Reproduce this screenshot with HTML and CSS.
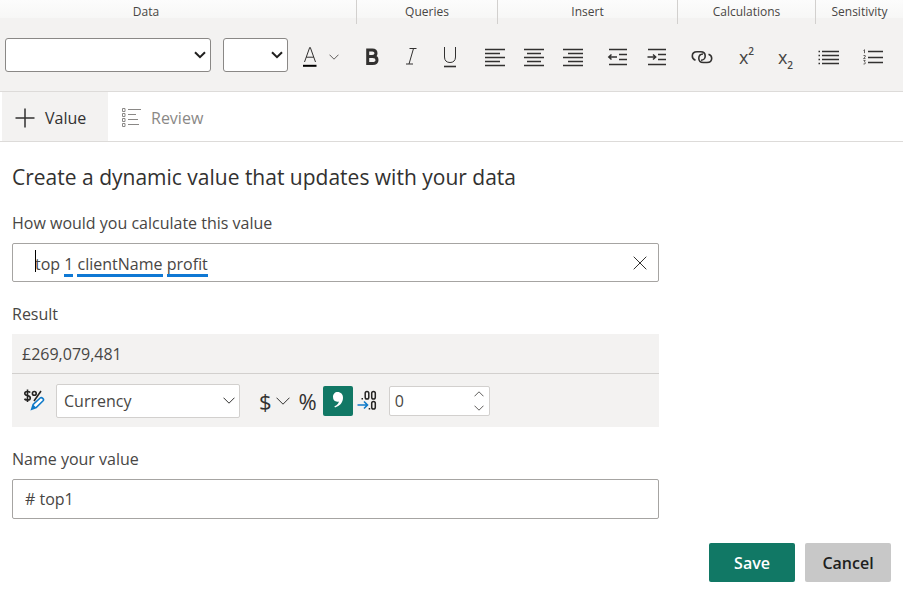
FILE: index.html
```html
<!DOCTYPE html>
<html lang="en">
<head>
<meta charset="utf-8">
<meta name="viewport" content="width=device-width, initial-scale=1">
<title>Smart narrative value</title>
<link rel="stylesheet" href="styles.css">
</head>
<body>
<header class="ribbon">
  <span class="ribbon-group ribbon-data">Data</span>
  <span class="ribbon-group">Queries</span>
  <span class="ribbon-group">Insert</span>
  <span class="ribbon-group">Calculations</span>
  <span class="ribbon-group">Sensitivity</span>
</header>

<div class="toolbar" role="toolbar" aria-label="Text formatting">
  <div class="picker picker-font">
    <select aria-label="Font family"><option></option></select>
    <svg class="picker-arrow" width="12" height="8" viewBox="0 0 12 8"><path d="M1 1.2l5 5 5-5"/></svg>
  </div>
  <div class="picker picker-size">
    <select aria-label="Font size"><option></option></select>
    <svg class="picker-arrow" width="12" height="8" viewBox="0 0 12 8"><path d="M1 1.2l5 5 5-5"/></svg>
  </div>
  <button class="color-button" aria-label="Font color">
    <svg class="icon" width="16" height="24" viewBox="0 0 16 24"><path d="M2.500 17L7.700 2.500h.6L13.500 17M4.200 12.200h7.600"/><path class="bar" d="M1 20.800h13.500"/></svg>
    <svg class="icon fine" width="10" height="6" viewBox="0 0 10 6"><path d="M.5.700L5 5.200 9.500.700"/></svg>
  </button>
  <div class="tool-group">
    <button class="tool" aria-label="Bold"><svg class="icon" width="24" height="24" viewBox="0 0 24 24"><path class="heavy" d="M7.700 5v13.500h4.800c3 0 4.500-1.300 4.500-3.600 0-2.100-1.500-3.300-4.300-3.400H7.700h4.500c2.500 0 3.800-1.200 3.800-3.200C16 6 14.800 5 12.300 5z"/></svg></button>
    <button class="tool" aria-label="Italic"><svg class="icon" width="24" height="24" viewBox="0 0 24 24"><path d="M10.500 3.500h7M7 19h7M14.500 3.500L10 19"/></svg></button>
    <button class="tool" aria-label="Underline"><svg class="icon" width="24" height="24" viewBox="0 0 24 24"><path d="M6.500 2v10c0 3.700 2.200 5.500 5.500 5.500s5.500-1.800 5.500-5.500V2"/><path d="M6 21.500h12" stroke-width="1.600"/></svg></button>
  </div>
  <div class="tool-group">
    <button class="tool" aria-label="Align left"><svg class="icon" width="24" height="24" viewBox="0 0 24 24"><g stroke-width="1.600"><path d="M2 4.500h20M2 8.500h15M2 12.500h20M2 16.500h15M2 20.500h20"/></g></svg></button>
    <button class="tool" aria-label="Align center"><svg class="icon" width="24" height="24" viewBox="0 0 24 24"><g stroke-width="1.600"><path d="M2 4.500h20M5 8.500h14M2 12.500h20M5 16.500h14M2 20.500h20"/></g></svg></button>
    <button class="tool" aria-label="Align right"><svg class="icon" width="24" height="24" viewBox="0 0 24 24"><g stroke-width="1.600"><path d="M2 4.500h20M7 8.500h15M2 12.500h20M7 16.500h15M2 20.500h20"/></g></svg></button>
  </div>
  <div class="tool-group">
    <button class="tool" aria-label="Decrease indent"><svg class="icon" width="24" height="24" viewBox="0 0 24 24"><g stroke-width="1.500"><path d="M3 4.500h18M13 9.500h8M13 14.500h8M3 19.500h18M2.500 12H11M5.500 9.500L2.800 12l2.700 2.500"/></g></svg></button>
    <button class="tool" aria-label="Increase indent"><svg class="icon" width="24" height="24" viewBox="0 0 24 24"><g stroke-width="1.500"><path d="M3 4.500h18M13 9.500h8M13 14.500h8M3 19.500h18M2.500 12H11M8 9.500l2.700 2.500L8 14.500"/></g></svg></button>
  </div>
  <div class="tool-group">
    <button class="tool" aria-label="Link"><svg class="icon" width="24" height="24" viewBox="0 0 24 24"><g stroke-width="1.600"><path d="M5.500 15.200C3.300 14.400 2.300 12.700 2.300 11 2.300 8.500 4.200 6.700 7 6.700h3.700c2.800 0 4.500 1.900 4.500 4.300s-1.800 4.300-4.200 4.300"/><path d="M18.500 9.200c2.200.8 3.200 2.300 3.200 4 0 2.500-1.900 4.300-4.700 4.300h-3.700c-2.800 0-4.500-1.900-4.500-4.300s1.800-4.100 4.200-4.200"/></g></svg></button>
  </div>
  <div class="tool-group">
    <button class="tool script" aria-label="Superscript">x<sup>2</sup></button>
    <button class="tool script" aria-label="Subscript">x<sub>2</sub></button>
  </div>
  <div class="tool-group tool-lists">
    <button class="tool" aria-label="Bulleted list"><svg class="icon" width="24" height="24" viewBox="0 0 24 24"><g stroke-width="1.500"><path d="M5 6.500h17M5 10.500h17M5 14.500h17M5 18.500h17"/><path d="M1.500 6.500H3M1.500 10.500H3M1.500 14.500H3M1.500 18.500H3"/></g></svg></button>
    <button class="tool" aria-label="Numbered list"><svg class="icon" width="24" height="24" viewBox="0 0 24 24"><path d="M7 6.500h15M7 12.500h15M7 17.500h15" stroke-width="1.500"/><path class="fine" d="M2.500 5.500l1-.8v3.500M2.500 10.500h1.700V12l-1.700 1.600h2M2.500 15.500h1.700l-.8 1.400 1 .8-.6 1.300H2.500"/></svg></button>
  </div>
</div>

<nav class="tabs">
  <button class="tab tab-active"><svg class="icon" width="20" height="20" viewBox="0 0 20 20"><path d="M10 .5v19M.5 10h19" stroke-width="1.500"/></svg>Value</button>
  <button class="tab tab-review"><svg class="icon" width="20" height="20" viewBox="0 0 20 20"><path d="M7 1.500h13M7 6.500h8M7 11.500h10M7 16.500h11"/><path d="M1.500.5h2.500v3H1.500zM1.500 5.500h2.500v3H1.500zM1.500 10.500h2.500v3H1.500zM1.500 15.500h2.500v3H1.500z"/></svg>Review</button>
</nav>

<main class="panel">
  <h1>Create a dynamic value that updates with your data</h1>
  <form class="form">
    <label for="query">How would you calculate this value</label>
    <div class="query">
      <input id="query" type="text" value="top 1 clientName profit" spellcheck="false">
      <div class="query-marks" aria-hidden="true">
        <span class="caret"></span><span class="mark mark-number"></span><span class="mark mark-field"></span><span class="mark mark-measure"></span>
      </div>
      <button class="clear" type="button" aria-label="Clear"><svg class="icon" width="14" height="14" viewBox="0 0 14 14"><path d="M.700.700l12.600 12.600M13.300.700L.700 13.300"/></svg></button>
    </div>

    <span class="caption">Result</span>
    <section class="result" aria-label="Result">
      <output class="result-value">£269,079,481</output>
      <div class="format">
        <svg class="format-icon" width="22" height="24" viewBox="0 0 22 24" aria-hidden="true">
          <g fill="none" stroke="#252423" stroke-width="1.600"><path d="M7.300 3.500C6.500 2.700 5.500 2.500 4.300 2.500c-1.500 0-2.500.8-2.500 1.900 0 2.900 5.500 1.400 5.500 4.500 0 1.300-1.200 2.100-2.700 2.100-1.300 0-2.300-.3-3.200-1M4.500.5v12.500"/><circle cx="11.300" cy="4.400" r="1.900"/><path d="M18 2l-7 10"/></g>
          <path d="M8.700 20.200l1.500-4.700 7-6.500c1.500-1.400 4.300 1.300 2.900 2.800l-6.900 6.800z" fill="#fff" stroke="#0f7ac9" stroke-width="1.600"/><path d="M10.200 15.700l3 2.900-4.500 1.600z" fill="#0f7ac9"/>
        </svg>
        <div class="format-type">
          <select aria-label="Format"><option>Currency</option></select>
          <svg class="icon" width="12" height="7" viewBox="0 0 12 7"><path d="M.5.700L6 6.200 11.500.700"/></svg>
        </div>
        <div class="format-buttons">
          <button class="currency" type="button" aria-label="Currency symbol">$<svg class="icon" width="14" height="8" viewBox="0 0 14 8"><path d="M.5.700L7 7.200 13.500.700"/></svg></button>
          <button class="percent" type="button" aria-label="Percent">%</button>
          <button class="thousands" type="button" aria-label="Thousands separator" aria-pressed="true"><svg width="12" height="18" viewBox="0 0 12 18"><path d="M5.500 0C8.800 0 11 2.200 11 5.800c0 4.800-3.200 8.400-8 9.700l-.6-1.200c2.600-1.100 4.200-2.700 4.500-4.800-.5.200-1 .3-1.600.3C2.700 9.800 1 7.900 1 5.100 1 2.100 2.900 0 5.500 0z" fill="#fff"/></svg></button>
          <label class="decimals-icon" for="decimals" title="Decimal places"><svg width="20" height="22" viewBox="0 0 20 22"><g fill="none" stroke="#252423" stroke-width="1.500"><rect x="8.200" y="1.500" width="3.600" height="7.500" rx="1.800"/><rect x="14.700" y="1.500" width="3.600" height="7.500" rx="1.800"/><rect x="14.700" y="11.500" width="3.600" height="7.500" rx="1.800"/><path d="M4.500 8.800H6M11.700 18.800h1.500"/></g><path d="M.5 15h10M7 11.500l3.500 3.500L7 18.500" fill="none" stroke="#0f7ac9" stroke-width="1.600"/></svg></label>
        </div>
        <div class="decimals">
          <input id="decimals" type="text" inputmode="numeric" value="0">
          <div class="spin">
            <button type="button" aria-label="Increase"><svg class="icon fine" width="10" height="6" viewBox="0 0 10 6"><path d="M.5 5.300L5 .800l4.500 4.500"/></svg></button>
            <button type="button" aria-label="Decrease"><svg class="icon fine" width="10" height="6" viewBox="0 0 10 6"><path d="M.5.700L5 5.200 9.500.700"/></svg></button>
          </div>
        </div>
      </div>
    </section>

    <label for="name">Name your value</label>
    <input class="name" id="name" type="text" value="# top1" spellcheck="false">
  </form>
</main>

<footer class="actions">
  <button class="action save">Save</button>
  <button class="action cancel">Cancel</button>
</footer>
</body>
</html>
```
FILE: styles.css
```css
* { box-sizing: border-box; }

body {
  margin: 0;
  background: #fff;
  color: #484644;
  font: 16px/24px "Segoe UI", "Open Sans", "Noto Sans", sans-serif;
}

button, input, select {
  margin: 0;
  padding: 0;
  border: 0;
  background: none;
  color: inherit;
  font: inherit;
}

select { appearance: none; }

svg { display: block; flex: none; }

.icon {
  fill: none;
  stroke: #323130;
}

/* Ribbon group captions */
.ribbon {
  display: grid;
  grid-template-columns: 357fr 141fr 180fr 138fr 87fr;
  height: 18px;
  background: linear-gradient(#fcfcfc, #f7f7f6);
  font-size: 12px;
  line-height: 24px;
}

.ribbon-group {
  border-right: 1px solid #d2d0ce;
  text-align: center;
}

.ribbon-data { padding-right: 64px; }
.ribbon-group:last-child { border-right: 0; }

/* Formatting toolbar */
.toolbar {
  display: flex;
  align-items: center;
  gap: 6px;
  height: 74px;
  padding: 0 5px;
  border-bottom: 1px solid #dddbd9;
  background: #f3f2f1;
}

.picker {
  display: grid;
  align-items: center;
  height: 34px;
  margin-right: 6px;
  border: 1px solid #8a8886;
  border-radius: 3px;
  background: #fff;
}

.picker-font { width: 206px; }
.picker-size { width: 65px; }

.picker select, .picker-arrow { grid-area: 1 / 1; }
.picker select { width: 100%; height: 100%; }

.picker-arrow {
  justify-self: end;
  margin-right: 4px;
  fill: none;
  stroke: #201f1e;
  stroke-width: 2px;
  pointer-events: none;
}

.color-button {
  display: flex;
  align-items: center;
  gap: 11px;
  width: 46px;
  padding: 4px 0 0 2px;
}

.color-button .bar { stroke: #000; stroke-width: 2px; }

.tool-group { display: flex; }

.tool {
  display: flex;
  align-items: center;
  justify-content: center;
  width: 39px;
  height: 34px;
  padding-top: 4px;
}

.tool .heavy { stroke-width: 3px; }
.fine { stroke: #605e5c; }

.script { font-size: 18px; }

.script sup, .script sub {
  font-size: 10px;
  font-weight: 600;
  line-height: 12px;
}

.script sup { margin-bottom: 12px; }
.script sub { margin-top: 16px; }

.tool-lists { gap: 8px; }
.tool-lists .tool { width: 36px; }

/* Tabs */
.tabs {
  display: flex;
  height: 50px;
  padding-left: 2px;
  border-bottom: 1px solid #dddbd9;
}

.tab {
  display: flex;
  align-items: center;
  gap: 10px;
  padding: 2px 13px 0;
}

.tab-active {
  width: 106px;
  background: #f3f2f1;
  color: #323130;
}

.tab-review { color: #8a8886; }
.tab-review .icon { stroke: #8a8886; }

/* Value editor */
.panel { padding: 21px 12px 0; }

h1 {
  margin: 0;
  color: #323130;
  font-size: 21px;
  font-weight: 400;
  line-height: 28px;
}

.form {
  display: flex;
  flex-direction: column;
  max-width: 647px;
}

label, .caption { line-height: 24px; }
.form > label, .caption { margin-top: 20px; }

.query {
  display: grid;
  grid-template-columns: 1fr 37px;
  position: relative;
  height: 39px;
  margin-top: 8px;
  border: 1px solid #a6a4a2;
  border-radius: 2px;
}

.query input { padding: 2px 0 0 22px; }

.query-marks {
  display: flex;
  align-items: flex-end;
  position: absolute;
  inset: 0 auto 4px 22px;
  pointer-events: none;
}

.caret {
  width: 1px;
  height: 22px;
  margin: 0 28px 5px 0;
  background: #000;
}

.mark { height: 3px; background: #0f78d4; }
.mark-number { width: 9px; margin-right: 4px; }
.mark-field { width: 86px; margin-right: 4px; }
.mark-measure { width: 41px; }

.clear {
  display: flex;
  align-items: center;
  justify-content: center;
}

.result {
  margin-top: 8px;
  background: #f3f2f1;
}

.result-value {
  display: block;
  padding: 8px 10px 7px;
  border-bottom: 1px solid #d2d0ce;
}

.format {
  display: flex;
  align-items: center;
  height: 53px;
  padding-left: 11px;
}

.format-type {
  display: grid;
  align-items: center;
  width: 184px;
  height: 34px;
  margin: 0 19px 0 11px;
  border: 1px solid #d2d0ce;
  border-radius: 2px;
  background: #fff;
}

.format-type select, .format-type .icon { grid-area: 1 / 1; }
.format-type select { height: 100%; padding-left: 7px; }

.format-type .icon {
  justify-self: end;
  margin-right: 4px;
  pointer-events: none;
}

.format-buttons {
  display: flex;
  align-items: center;
  color: #323130;
  font-size: 22px;
}

.currency {
  display: flex;
  align-items: center;
  gap: 4px;
  margin-right: 9px;
}

.percent { margin-right: 6px; }

.thousands {
  display: flex;
  align-items: center;
  justify-content: center;
  width: 30px;
  height: 30px;
  border-radius: 2px;
  background: #117865;
}

.decimals-icon { margin: 0 12px 0 4px; }

.decimals {
  display: flex;
  width: 101px;
  height: 30px;
  border: 1px solid #d2d0ce;
  border-radius: 2px;
  background: #fff;
}

.decimals input {
  flex: 1;
  min-width: 0;
  padding-left: 5px;
}

.spin {
  display: flex;
  flex-direction: column;
  width: 20px;
}

.spin button {
  display: flex;
  flex: 1;
  align-items: center;
  justify-content: center;
}

.name {
  height: 40px;
  margin-top: 8px;
  padding-left: 12px;
  border: 1px solid #a6a4a2;
  border-radius: 2px;
}

.actions {
  display: flex;
  justify-content: flex-end;
  gap: 10px;
  padding: 24px 12px 12px;
}

.action {
  width: 86px;
  height: 39px;
  border-radius: 2px;
  font-weight: 600;
}

.save { background: #117865; color: #fff; }
.cancel { background: #c8c8c8; color: #201f1e; }
```
